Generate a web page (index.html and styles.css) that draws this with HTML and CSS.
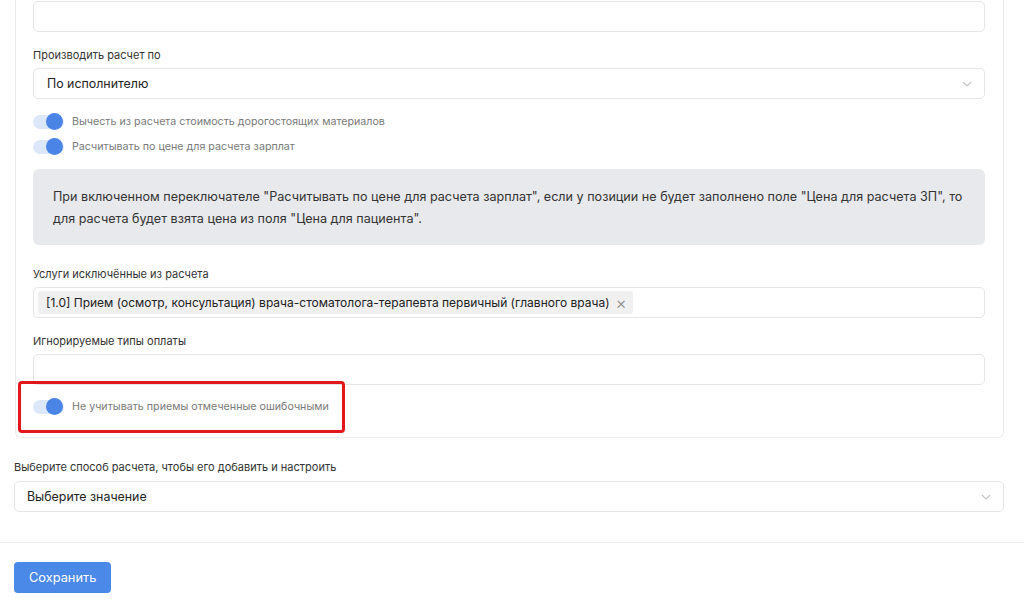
FILE: index.html
```html
<!DOCTYPE html>
<html>
<head>
  <meta charset="utf-8">
  <meta name="viewport" content="width=device-width">
  <title>Настройка расчета</title>
  <link rel="stylesheet" href="styles.css">
</head>
<body>
<div class="page">
  <div class="card">
    <div class="control first"></div>

    <div class="field">
      <div class="label">Производить расчет по</div>
      <div class="control select">
        <span>По исполнителю</span>
        <svg class="chevron" width="10" height="6" viewBox="0 0 10 6"><path d="M1 1l4 4 4-4" fill="none" stroke="#c4c4c4" stroke-width="1.2"/></svg>
      </div>
    </div>

    <div class="switches top">
      <div class="switchRow">
        <span class="toggle"><span class="knob"></span></span>
        <span class="switchText">Вычесть из расчета стоимость дорогостоящих материалов</span>
      </div>
      <div class="switchRow">
        <span class="toggle"><span class="knob"></span></span>
        <span class="switchText">Расчитывать по цене для расчета зарплат</span>
      </div>
    </div>

    <div class="info">
      При включенном переключателе "Расчитывать по цене для расчета зарплат", если у позиции не будет заполнено поле "Цена для расчета ЗП", то для расчета будет взята цена из поля "Цена для пациента".
    </div>

    <div class="field wide">
      <div class="label">Услуги исключённые из расчета</div>
      <div class="control multi">
        <span class="chip">[1.0] Прием (осмотр, консультация) врача-стоматолога-терапевта первичный (главного врача) <span class="chipClose">×</span></span>
      </div>
    </div>

    <div class="field">
      <div class="label">Игнорируемые типы оплаты</div>
      <div class="control"></div>
    </div>

    <div class="switches">
      <div class="switchRow marked">
        <span class="toggle"><span class="knob"></span></span>
        <span class="switchText">Не учитывать приемы отмеченные ошибочными</span>
        <div class="highlight"></div>
      </div>
    </div>
  </div>

  <div class="field outer">
    <div class="label">Выберите способ расчета, чтобы его добавить и настроить</div>
    <div class="control select outerSelect">
      <span>Выберите значение</span>
      <svg class="chevron" width="10" height="6" viewBox="0 0 10 6"><path d="M1 1l4 4 4-4" fill="none" stroke="#c4c4c4" stroke-width="1.2"/></svg>
    </div>
  </div>
</div>

<div class="footer">
  <button class="saveBtn">Сохранить</button>
</div>
</body>
</html>
```

FILE: styles.css
```css
* {
  box-sizing: border-box;
}

body {
  margin: 0;
  font-family: Inter, "Noto Sans", sans-serif;
  color: #2b2b2b;
  background: #fff;
}

.page {
  padding: 0 20px 0 14px;
}

/* внутренняя карточка (верх обрезан прокруткой) */
.card {
  margin-left: 1px;
  border: 1px solid #ececec;
  border-top: none;
  border-radius: 0 0 6px 6px;
  padding: 1px 18px 18px 17px;
}

.control {
  height: 31px;
  border: 1px solid #e6e6e6;
  border-radius: 5px;
  background: #fff;
}

.field {
  margin-top: 15px;
}

.field.wide {
  margin-top: 21px;
}

.label {
  font-size: 11px;
  line-height: 16px;
  color: #333;
  margin-bottom: 5px;
}

.select {
  display: flex;
  align-items: center;
  justify-content: space-between;
  padding: 0 12px 0 13px;
  font-size: 12.4px;
  color: #222;
}

.chevron {
  display: block;
}

.switches {
  margin-top: 9px;
}

.switches.top {
  margin-top: 10px;
}

.switchRow {
  position: relative;
  display: flex;
  align-items: center;
  gap: 8px;
  height: 25px;
}

.toggle {
  position: relative;
  width: 31px;
  height: 14px;
  border-radius: 7px;
  background: #dde7fa;
}

.knob {
  position: absolute;
  right: 1px;
  top: -2px;
  width: 17px;
  height: 17px;
  border-radius: 50%;
  background: #4a84e6;
}

.switchText {
  font-size: 10.7px;
  color: #7a7a7a;
}

/* красная рамка-пометка */
.highlight {
  position: absolute;
  left: -15px;
  top: -13px;
  width: 327px;
  height: 52px;
  border: 3px solid #e3161c;
  border-radius: 4px;
}

.info {
  margin-top: 10px;
  padding: 17px 20px 15px;
  background: #e8e9ec;
  border-radius: 6px;
  font-size: 12.6px;
  line-height: 22px;
  color: #333;
}

.multi {
  display: flex;
  align-items: center;
  padding: 0 4px;
}

.chip {
  display: inline-flex;
  align-items: center;
  gap: 6px;
  height: 23px;
  padding: 0 6px 0 8px;
  background: #f0f0f1;
  border-radius: 3px;
  font-size: 12px;
  color: #222;
}

.chipClose {
  color: #8a8a8a;
  font-size: 17px;
  font-weight: 300;
}

.field.outer {
  margin-top: 21px;
}

.field.outer .label {
  margin-bottom: 6px;
}

.outerSelect {
  padding-left: 12px;
  padding-right: 12px;
}

.footer {
  margin-top: 30px;
  border-top: 1px solid #eeeeee;
  padding: 19px 14px;
}

.saveBtn {
  height: 31px;
  padding: 0 15px;
  border: none;
  border-radius: 4px;
  background: #4b89e8;
  color: #fff;
  font-family: Inter, "Noto Sans", sans-serif;
  font-size: 12.8px;
}
```
